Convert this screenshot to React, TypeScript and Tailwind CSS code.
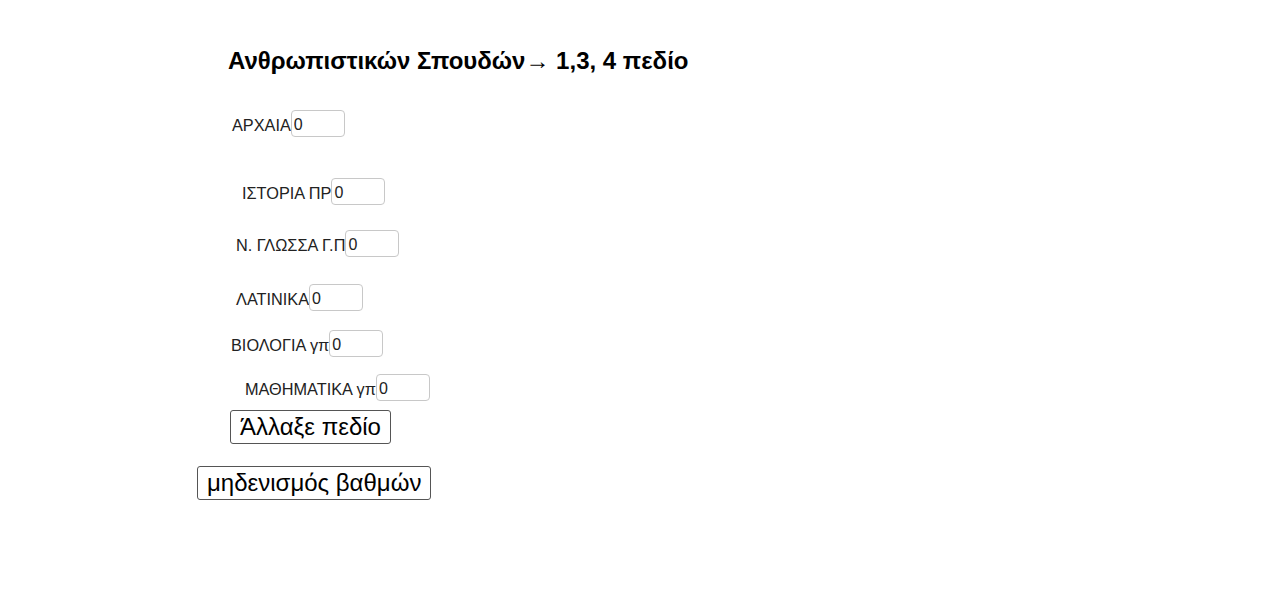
import React, { useState } from "react";

interface ISubject {
  label: string;
  left: number;
  top: number;
}

const subjects: ISubject[] = [
  { label: "ΑΡΧΑΙΑ", left: 232, top: 110 },
  { label: "ΙΣΤΟΡΙΑ ΠΡ", left: 242, top: 178 },
  { label: "Ν. ΓΛΩΣΣΑ Γ.Π", left: 236, top: 230 },
  { label: "ΛΑΤΙΝΙΚΑ", left: 236, top: 284 },
  { label: "ΒΙΟΛΟΓΙΑ γπ", left: 231, top: 330 },
  { label: "ΜΑΘΗΜΑΤΙΚΑ γπ", left: 245, top: 374 },
];

const App = () => {
  const [grades, setGrades] = useState<string[]>(subjects.map(() => "0"));

  const reset = () => setGrades(subjects.map(() => "0"));

  // free canvas applet: each item sits at its own spot
  return (
    <div
      className="relative w-[1263px] h-[605px] bg-white text-black overflow-hidden"
      style={{ fontFamily: '"Liberation Sans", Arial, sans-serif' }}
    >
      <div className="absolute left-[228px] top-[47px] text-[24px] leading-[28px] font-bold whitespace-nowrap">
        Ανθρωπιστικών Σπουδών
        <span
          className="font-normal"
          style={{ fontFamily: '"Liberation Serif", serif' }}
        >
          →
        </span>{" "}
        1,3, 4 πεδίο
      </div>

      {subjects.map((s, i) => (
        <div
          key={s.label}
          className="absolute flex items-center h-[27px] whitespace-nowrap"
          style={{ left: s.left, top: s.top }}
        >
          <span className="text-[16.3px] leading-[18px] text-[#222] pt-[2px]">{s.label}</span>
          <input
            value={grades[i]}
            onChange={(e) =>
              setGrades((prev) => prev.map((g, j) => (j === i ? e.target.value : g)))
            }
            className="w-[54px] h-[27px] border border-[#c8c8c8] rounded-[4px] px-[2px] pt-[3px] text-[16px] text-[#222] outline-none bg-white"
          />
        </div>
      ))}

      <button className="absolute left-[230px] top-[410px] h-[34px] px-[9px] border border-[#555] rounded-[3px] bg-white text-[24px] leading-[28px] whitespace-nowrap">
        Άλλαξε πεδίο
      </button>

      <button
        onClick={reset}
        className="absolute left-[197px] top-[466px] h-[34px] px-[9px] border border-[#555] rounded-[3px] bg-white text-[24px] leading-[28px] whitespace-nowrap"
      >
        μηδενισμός βαθμών
      </button>
    </div>
  );
};

export default App;
